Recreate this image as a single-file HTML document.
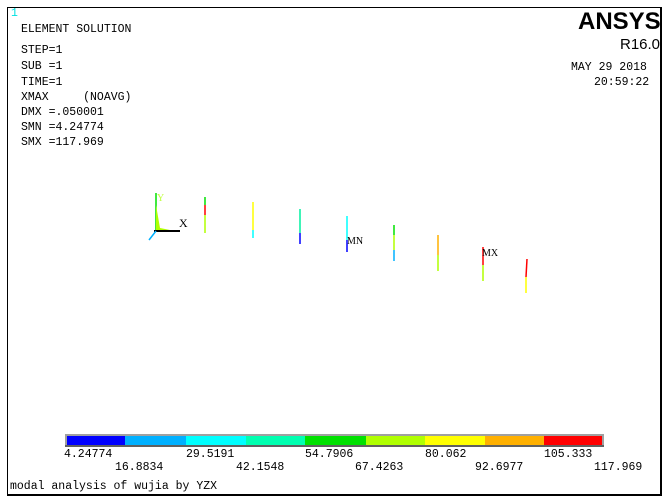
<!DOCTYPE html>
<html><head><style>
body{margin:0;width:665px;height:501px;background:#fff;position:relative;overflow:hidden;font-family:"Liberation Mono",monospace;font-size:11.5px;color:#000}
.t{position:absolute;white-space:pre;line-height:12px}
</style></head><body>
<div style="position:absolute;left:7px;top:7px;width:652px;height:486px;border:1px solid #000;border-right:2px solid #000;border-bottom:2px solid #000"></div>
<div class="t" style="left:11px;top:8px;color:#00e0e0">1</div>
<div class="t" style="left:21px;top:24px">ELEMENT SOLUTION</div>
<div class="t" style="left:21px;top:45px">STEP=1</div>
<div class="t" style="left:21px;top:61px">SUB =1</div>
<div class="t" style="left:21px;top:77px">TIME=1</div>
<div class="t" style="left:21px;top:92px">XMAX     (NOAVG)</div>
<div class="t" style="left:21px;top:107px">DMX =.050001</div>
<div class="t" style="left:21px;top:122px">SMN =4.24774</div>
<div class="t" style="left:21px;top:137px">SMX =117.969</div>
<div class="t" style="left:578px;top:9px;font-family:'Liberation Sans',sans-serif;font-weight:bold;font-size:24px;line-height:26px">ANSYS</div>
<div class="t" style="left:620px;top:37px;font-family:'Liberation Sans',sans-serif;font-size:15px;line-height:16px">R16.0</div>
<div class="t" style="left:571px;top:62px">MAY 29 2018</div>
<div class="t" style="left:594px;top:77px">20:59:22</div>
<svg width="665" height="501" style="position:absolute;left:0;top:0">
<g stroke-width="1.5">
<line x1="156" y1="193" x2="156" y2="230" stroke="#00e000"/>
<polygon points="156,205 160,228 170,230 156,232" fill="#b0ff00"/>
<line x1="154" y1="231" x2="180" y2="231" stroke="#000" stroke-width="2"/>
<line x1="156" y1="231" x2="149" y2="240" stroke="#00b0ff"/>
<line x1="205" y1="197" x2="205" y2="205" stroke="#00e000"/><line x1="205" y1="205" x2="205" y2="215" stroke="#f00"/><line x1="205" y1="215" x2="205" y2="233" stroke="#b0ff00"/>
<line x1="253" y1="202" x2="253" y2="230" stroke="#ffff00"/><line x1="253" y1="230" x2="253" y2="238" stroke="#00ffff"/>
<line x1="300" y1="209" x2="300" y2="233" stroke="#00f0a0"/><line x1="300" y1="233" x2="300" y2="244" stroke="#0000ff"/>
<line x1="347" y1="216" x2="347" y2="240" stroke="#00ffff"/><line x1="347" y1="240" x2="347" y2="252" stroke="#0000ff"/>
<line x1="394" y1="225" x2="394" y2="235" stroke="#00e000"/><line x1="394" y1="235" x2="394" y2="250" stroke="#b0ff00"/><line x1="394" y1="250" x2="394" y2="261" stroke="#00b0ff"/>
<line x1="438" y1="235" x2="438" y2="255" stroke="#ffb000"/><line x1="438" y1="255" x2="438" y2="271" stroke="#b0ff00"/>
<line x1="483" y1="247" x2="483" y2="265" stroke="#f00"/><line x1="483" y1="265" x2="483" y2="281" stroke="#b0ff00"/>
<line x1="527" y1="259" x2="526" y2="277" stroke="#f00"/><line x1="526" y1="277" x2="526" y2="293" stroke="#ffff00"/>
</g>
<text x="179" y="227" font-family="Liberation Serif" font-size="12">X</text>
<text x="157" y="201" font-family="Liberation Serif" font-size="10" fill="#c0ff40">Y</text>
<text x="347" y="244" font-family="Liberation Serif" font-size="10">MN</text>
<text x="482" y="256" font-family="Liberation Serif" font-size="10">MX</text>
<rect x="65" y="434" width="539" height="13" fill="#a0a0a0"/>
<rect x="67" y="436" width="58" height="9" fill="#0000ff"/>
<rect x="125" y="436" width="61" height="9" fill="#00b0ff"/>
<rect x="186" y="436" width="60" height="9" fill="#00ffff"/>
<rect x="246" y="436" width="59" height="9" fill="#00ffb0"/>
<rect x="305" y="436" width="61" height="9" fill="#00e000"/>
<rect x="366" y="436" width="59" height="9" fill="#b0ff00"/>
<rect x="425" y="436" width="60" height="9" fill="#ffff00"/>
<rect x="485" y="436" width="59" height="9" fill="#ffb000"/>
<rect x="544" y="436" width="58" height="9" fill="#ff0000"/>
<rect x="65" y="445" width="539" height="2" fill="#606060"/>
</svg>
<div class="t" style="left:64px;top:449px">4.24774</div>
<div class="t" style="left:186px;top:449px">29.5191</div>
<div class="t" style="left:305px;top:449px">54.7906</div>
<div class="t" style="left:425px;top:449px">80.062</div>
<div class="t" style="left:544px;top:449px">105.333</div>
<div class="t" style="left:115px;top:462px">16.8834</div>
<div class="t" style="left:236px;top:462px">42.1548</div>
<div class="t" style="left:355px;top:462px">67.4263</div>
<div class="t" style="left:475px;top:462px">92.6977</div>
<div class="t" style="left:594px;top:462px">117.969</div>
<div class="t" style="left:10px;top:481px">modal analysis of wujia by YZX</div>
</body></html>
